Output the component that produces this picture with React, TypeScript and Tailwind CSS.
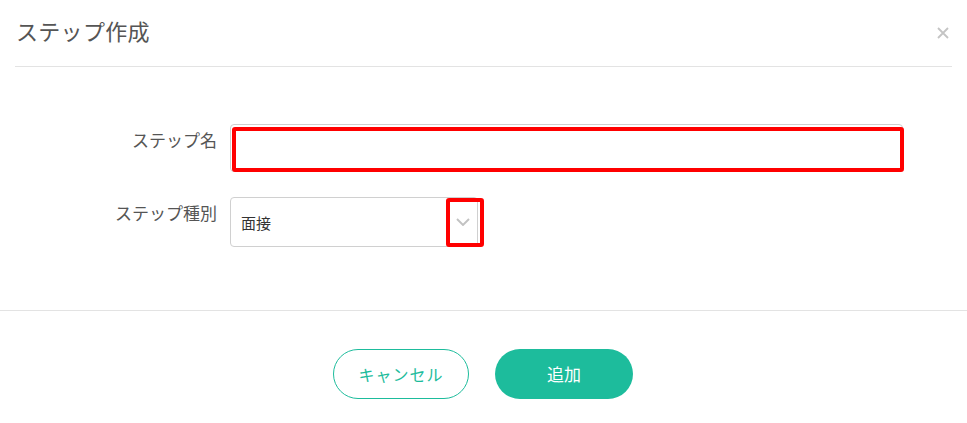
import React from "react";

export default function App() {
  return (
    <div
      className="relative w-[967px] h-[423px] bg-white overflow-hidden"
      style={{ fontFamily: '"Noto Sans CJK JP", "Noto Sans", sans-serif' }}
    >
      {/* Header */}
      <div className="mx-[15px] h-[67px] border-b border-[#e3e3e3] flex items-start justify-between pt-[15px]">
        <div className="text-[22px] leading-[30px] text-[#555] pl-[1px] tracking-[0.3px]">ステップ作成</div>
        <button className="mt-[12px] mr-[3px] text-[#c4c4c4]" aria-label="close">
          <svg width="12" height="12" viewBox="0 0 12 12">
            <path d="M1 1 L11 11 M11 1 L1 11" stroke="currentColor" strokeWidth="1.8" />
          </svg>
        </button>
      </div>

      {/* Body */}
      <div className="pt-[57px] pb-[63px] flex flex-col gap-[25px]">
        <div className="flex items-start">
          <label className="w-[217px] text-right text-[17px] leading-[24px] pt-[4px] text-[#555]">
            ステップ名
          </label>
          <div className="ml-[13px] w-[673px] h-[48px] border border-[#cfcfcf] rounded-[4px] relative">
            <div className="absolute left-[1px] top-[2px] right-[-2px] bottom-[-1px] border-[4px] border-[#ff0000] rounded-[3px]" />
          </div>
        </div>
        <div className="flex items-start">
          <label className="w-[217px] text-right text-[17px] leading-[24px] pt-[4px] text-[#555]">
            ステップ種別
          </label>
          <div className="ml-[13px] w-[248px] h-[50px] border border-[#d0d0d0] rounded-[4px] relative flex items-center">
            <span className="pl-[10px] text-[15px] text-[#333] pt-[2px]">面接</span>
            <div className="absolute right-[7px] top-[20px] text-[#c2c2c2]">
              <svg width="14" height="8" viewBox="0 0 14 8">
                <path d="M1 1 L7 7 L13 1" fill="none" stroke="currentColor" strokeWidth="1.9" />
              </svg>
            </div>
            <div className="absolute left-[215px] top-[0px] w-[38px] h-[49px] border-[4px] border-[#ff0000] rounded-[3px]" />
          </div>
        </div>
      </div>

      {/* Footer */}
      <div className="border-t border-[#e3e3e3] pt-[38px] pr-[1px] flex justify-center gap-[26px]">
        <button className="w-[136px] h-[50px] rounded-full border border-[#1dbc9c] text-[#1dbc9c] text-[16px] tracking-[1px] bg-white">
          キャンセル
        </button>
        <button className="w-[138px] h-[50px] rounded-full bg-[#1dbc9c] text-white text-[17px]">
          追加
        </button>
      </div>
    </div>
  );
}
